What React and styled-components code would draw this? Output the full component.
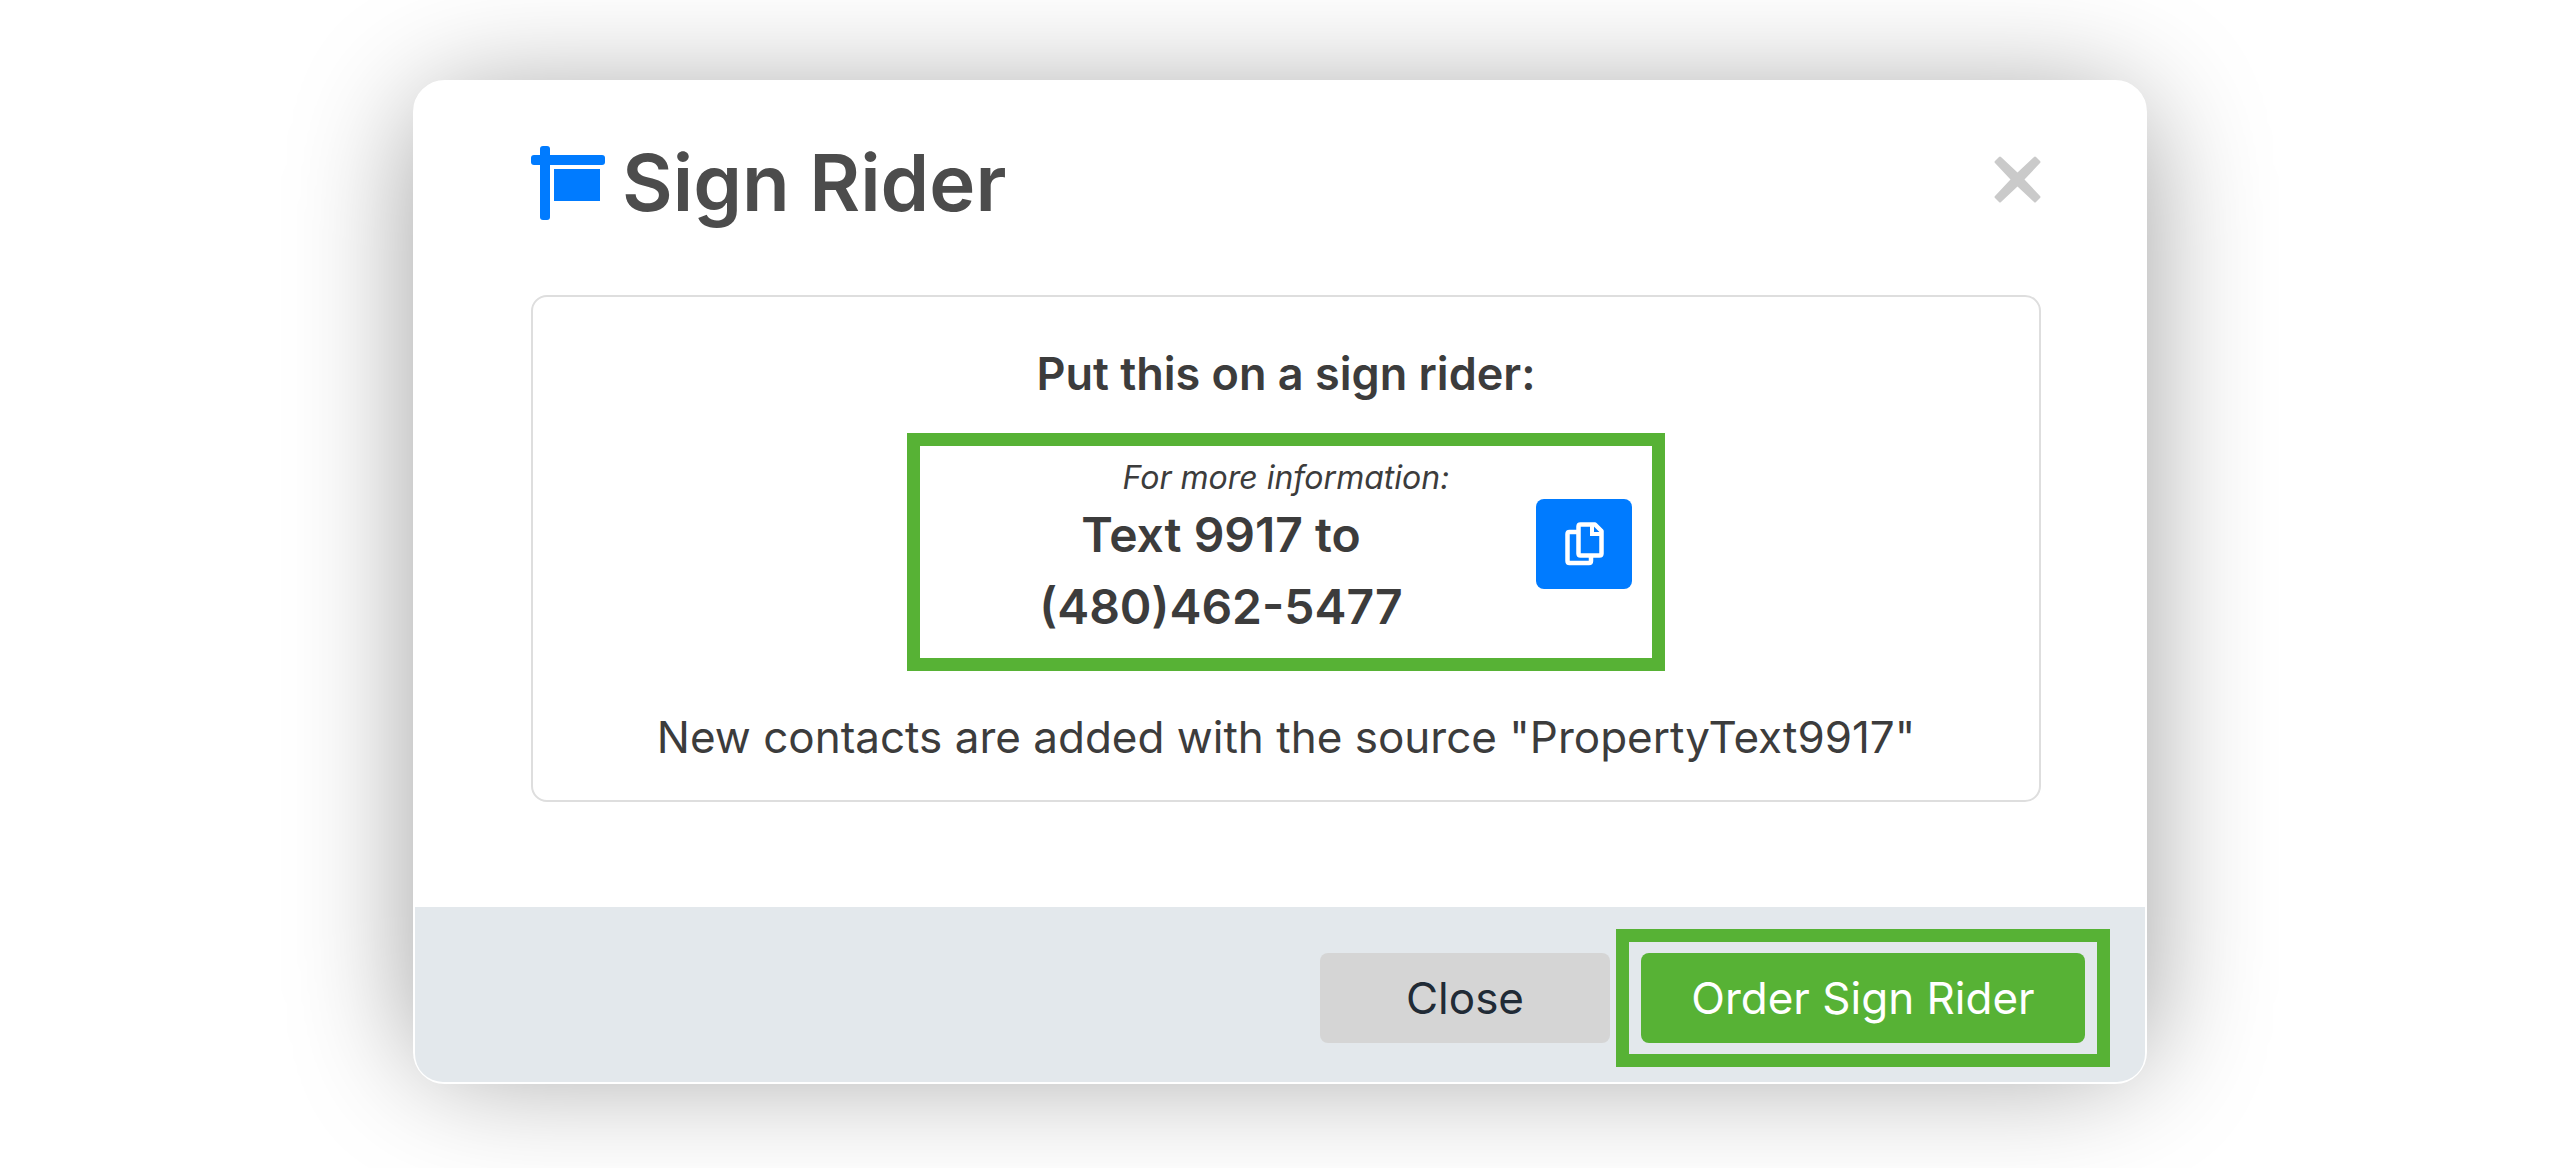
import React from "react";
import styled, { createGlobalStyle } from "styled-components";

const GlobalStyle = createGlobalStyle`
  *, *::before, *::after { box-sizing: border-box; }
  body {
    margin: 0;
    background: #fff;
    color: #3c3c3c;
    font-family: Inter, "Noto Sans", sans-serif;
  }
  h1, h2, p { margin: 0; }
`;

const Page = styled.main`
  display: flex;
  align-items: flex-start;
  justify-content: center;
  min-height: 100vh;
  padding: 80px;
`;

const Dialog = styled.section`
  position: relative;
  flex: 1;
  max-width: 1734px;
  border: 2px solid #fff;
  border-radius: 32px;
  background: #fff;

  &::before {
    content: "";
    position: absolute;
    z-index: -1;
    inset: 14px -2px 10px;
    border-radius: 64px;
    box-shadow: 0 0 120px rgba(0, 0, 0, 0.38);
  }
`;

const Header = styled.header`
  display: flex;
  align-items: center;
  gap: 17px;
  padding: 64px 104px 75px 116px;
`;

const Title = styled.h1`
  flex: 1;
  color: #4c4c4c;
  font-size: 78px;
  font-weight: 600;
  line-height: 74px;
`;

const IconButton = styled.button`
  display: flex;
  padding: 0 0 8px;
  border: 0;
  background: none;
  color: #cacaca;
  cursor: pointer;
`;

const Body = styled.div`
  padding: 0 104px 105px 116px;
`;

const Card = styled.div`
  display: flex;
  flex-direction: column;
  align-items: center;
  padding: 45px 24px 31px;
  border: 2px solid #dedede;
  border-radius: 16px;
  text-align: center;
`;

const CardTitle = styled.h2`
  font-size: 45px;
  font-weight: 600;
  line-height: 64px;
`;

const Note = styled.p`
  font-size: 44px;
  line-height: 64px;
`;

const Highlight = styled.div`
  border: 13px solid #57b235;
`;

const RiderHighlight = styled(Highlight)`
  width: 758px;
  max-width: 100%;
  margin: 27px 0 34px;
  padding: 11px 20px 15px 0;
`;

const Hint = styled.p`
  padding-left: 20px;
  font-size: 32px;
  font-style: italic;
  line-height: 42px;
`;

const RiderRow = styled.div`
  display: flex;
  align-items: flex-start;
  gap: 14px;
`;

const RiderText = styled.p`
  flex: 1;
  font-size: 48px;
  font-weight: 600;
  line-height: 72px;
`;

const Button = styled.button`
  display: flex;
  align-items: center;
  justify-content: center;
  width: ${(p) => p.$width};
  height: 90px;
  padding: 0;
  border: 0;
  border-radius: 8px;
  background: ${(p) => p.$fill};
  color: ${(p) => p.$ink || "#fff"};
  font-family: inherit;
  font-size: 44px;
  cursor: pointer;
`;

const Footer = styled.footer`
  display: flex;
  align-items: center;
  justify-content: flex-end;
  gap: 6px;
  padding: 22px 35px 15px;
  border-radius: 0 0 28px 28px;
  background: #e3e8ec;
`;

const ActionHighlight = styled(Highlight)`
  padding: 11px 12px;
`;

const SignIcon = () => (
  <svg width="74" height="74" viewBox="0 0 74 74" fill="#007bff" aria-hidden="true">
    <rect x="9" y="0" width="10" height="74" rx="3" />
    <rect x="0" y="9" width="74" height="10" rx="3" />
    <rect x="23" y="23" width="46" height="32" />
  </svg>
);

const CloseIcon = () => (
  <svg width="47" height="47" viewBox="0 0 47 47" fill="currentColor" aria-hidden="true">
    <path d="M5 1 L1 5 Q0 6 1 7 L16.500 23.500 L1 40 Q0 41 1 42 L5 46 Q6 47 7 46 L23.500 30.500 L40 46 Q41 47 42 46 L46 42 Q47 41 46 40 L30.500 23.500 L46 7 Q47 6 46 5 L42 1 Q41 0 40 1 L23.500 16.500 L7 1 Q6 0 5 1 Z" />
  </svg>
);

const CopyIcon = () => (
  <svg width="39" height="44" viewBox="0 0 39 44" fill="none" stroke="#fff" strokeWidth="4.500" strokeLinejoin="round" aria-hidden="true">
    <path d="M12 10 H4.500 Q2.500 10 2.500 12 V39 Q2.500 41 4.500 41 H24 Q26 41 26 39 V34" />
    <path d="M15.500 2.500 H30 L36.500 9 V31.500 Q36.500 33.500 34.500 33.500 H15.500 Q13.500 33.500 13.500 31.500 V4.500 Q13.500 2.500 15.500 2.500 Z" />
    <path d="M27 3 V12 H36" strokeWidth="4" strokeLinejoin="miter" />
  </svg>
);

export default function App() {
  return (
    <>
      <GlobalStyle />
      <Page>
        <Dialog role="dialog" aria-labelledby="dialog-title">
          <Header>
            <SignIcon />
            <Title id="dialog-title">Sign Rider</Title>
            <IconButton type="button" aria-label="Dismiss">
              <CloseIcon />
            </IconButton>
          </Header>
          <Body>
            <Card>
              <CardTitle>Put this on a sign rider:</CardTitle>
              <RiderHighlight>
                <Hint>For more information:</Hint>
                <RiderRow>
                  <RiderText>
                    Text 9917 to
                    <br />
                    (480)462-5477
                  </RiderText>
                  <Button type="button" aria-label="Copy" $width="96px" $fill="#007bff">
                    <CopyIcon />
                  </Button>
                </RiderRow>
              </RiderHighlight>
              <Note>New contacts are added with the source "PropertyText9917"</Note>
            </Card>
          </Body>
          <Footer>
            <Button type="button" $width="290px" $fill="#d5d5d5" $ink="#212b36">
              Close
            </Button>
            <ActionHighlight>
              <Button type="button" $width="444px" $fill="#57b235">
                Order Sign Rider
              </Button>
            </ActionHighlight>
          </Footer>
        </Dialog>
      </Page>
    </>
  );
}
